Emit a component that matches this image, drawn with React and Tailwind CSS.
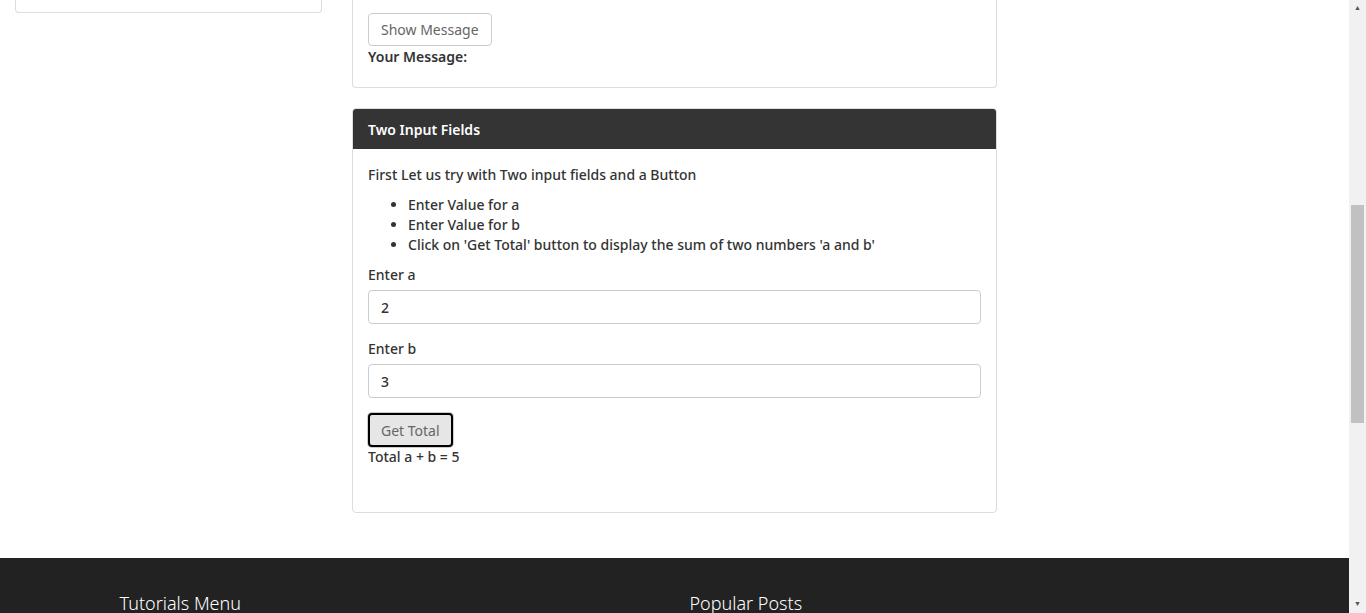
import React, { useState } from "react";

const App = () => {
  const [a, setA] = useState("2");
  const [b, setB] = useState("3");
  const [total, setTotal] = useState(5);

  return (
    <div className="flex w-full h-[613px] overflow-hidden font-['Noto_Sans',sans-serif] text-[14px] text-[#333]">
      <div className="flex-1 flex flex-col bg-white">
        <div className="flex pl-[15px] gap-[30px]">
          {/* Sidebar tail */}
          <aside className="w-[307px]">
            <div className="h-[13px] border border-t-0 border-[#ddd] rounded-b-[4px]" />
          </aside>

          {/* Main column */}
          <main className="w-[645px]">
            <div className="border border-t-0 border-[#ddd] rounded-b-[4px] px-[15px] pt-[13px] pb-[20px]">
              <button className="block h-[33px] px-[12px] border border-[#ccc] rounded-[4px] text-[#666] bg-white">
                Show Message
              </button>
              <p className="mt-[1px] font-semibold leading-[20px]">Your Message:</p>
            </div>

            {/* Two Input Fields */}
            <div className="mt-[20px] border border-[#ddd] rounded-[4px] overflow-hidden">
              <div className="h-[40px] flex items-center px-[15px] bg-[#343434] text-white font-semibold">
                Two Input Fields
              </div>
              <div className="px-[15px] pt-[16px] pb-[45px]">
                <p className="font-medium leading-[20px]">First Let us try with Two input fields and a Button</p>
                <ul className="list-disc pl-[40px] mt-[10px] font-medium leading-[20px]">
                  <li>Enter Value for a</li>
                  <li>Enter Value for b</li>
                  <li>Click on 'Get Total' button to display the sum of two numbers 'a and b'</li>
                </ul>

                <label className="block mt-[10px] font-medium leading-[20px]">Enter a</label>
                <input
                  value={a}
                  onChange={(e) => setA(e.target.value)}
                  className="mt-[5px] w-full h-[34px] px-[12px] border border-[#ccc] rounded-[4px] font-medium outline-none"
                />

                <label className="block mt-[15px] font-medium leading-[20px]">Enter b</label>
                <input
                  value={b}
                  onChange={(e) => setB(e.target.value)}
                  className="mt-[5px] w-full h-[34px] px-[12px] border border-[#ccc] rounded-[4px] font-medium outline-none"
                />

                <button
                  onClick={() => setTotal(Number(a) + Number(b))}
                  className="block mt-[15px] h-[34px] px-[11px] border-2 border-black rounded-[4px] bg-[#e6e6e6] text-[#666] shadow-[0_0_0_1px_#ccc]"
                >
                  Get Total
                </button>
                <p className="font-medium leading-[20px]">Total a + b = {total}</p>
              </div>
            </div>
          </main>
        </div>

        {/* Footer */}
        <footer className="mt-[45px] flex-1 bg-[#222] text-white">
          <div className="w-[1140px] mx-auto flex pt-[32px]">
            <div className="w-[570px] px-[15px] text-[18px] font-light leading-[26px]">Tutorials Menu</div>
            <div className="w-[570px] px-[15px] text-[18px] font-light leading-[26px]">Popular Posts</div>
          </div>
        </footer>
      </div>

      {/* Fake scrollbar */}
      <div className="w-[17px] bg-[#f1f1f1] flex flex-col items-center">
        <div className="h-[17px] flex items-center justify-center text-[#505050] text-[7px]">▲</div>
        <div className="flex-1 w-full flex flex-col pt-[188px] pb-[173px] px-[2px]">
          <div className="flex-1 bg-[#c1c1c1]" />
        </div>
        <div className="h-[17px] flex items-center justify-center text-[#505050] text-[7px]">▼</div>
      </div>
    </div>
  );
};

export default App;
